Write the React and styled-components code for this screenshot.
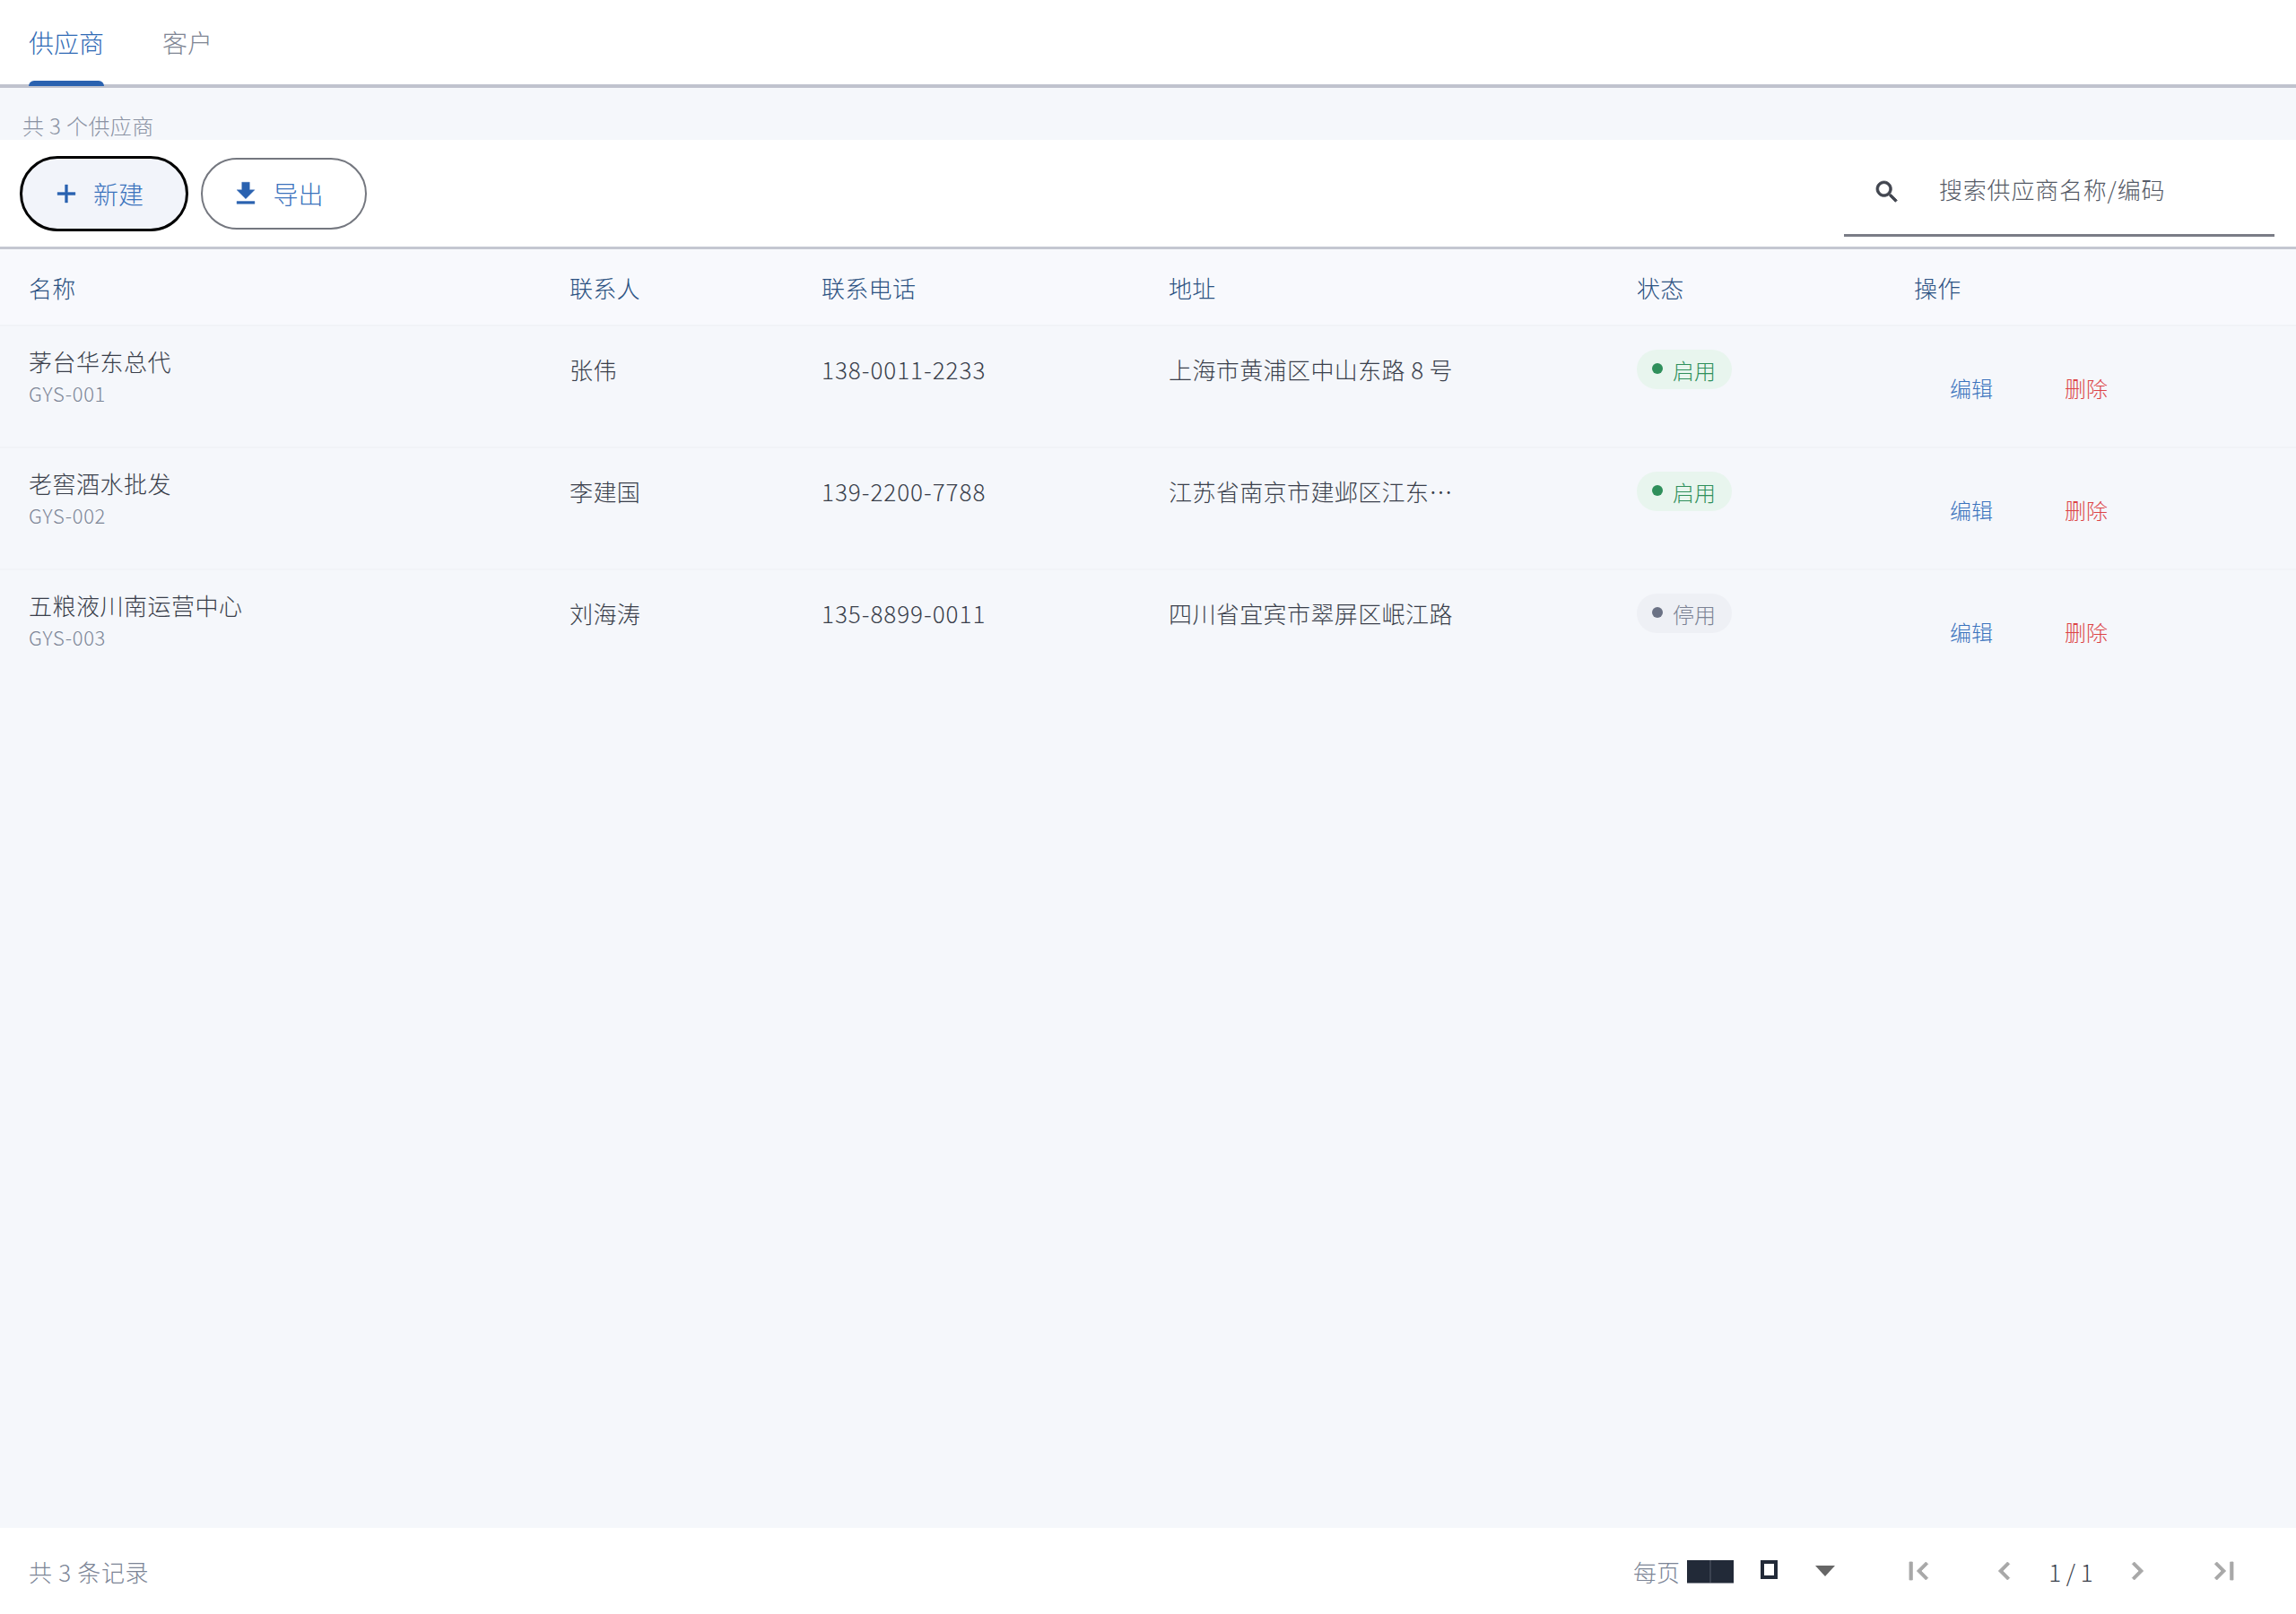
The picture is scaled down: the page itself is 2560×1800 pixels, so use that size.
import React from "react";
import styled, { createGlobalStyle } from "styled-components";

const GlobalStyle = createGlobalStyle`
  * { box-sizing: border-box; }
  html, body { margin: 0; padding: 0; }
  body {
    background: #f5f7fb;
    font-family: "Noto Sans CJK SC", "Noto Sans", sans-serif;
    font-weight: 200;
  }
`;

const Page = styled.div`
  height: 1800px;
  display: flex;
  flex-direction: column;
  background: #f5f7fb;
`;

const TabBar = styled.div`
  height: 98px;
  flex: none;
  display: flex;
  gap: 65px;
  padding-left: 32px;
  background: #fff;
  border-bottom: 4px solid #c0c3ce;
`;

const Tab = styled.div`
  position: relative;
  height: 94px;
  padding-top: 26px;
  font-size: 28px;
  line-height: 42px;
  color: ${(p) => (p.$active ? "#2f6ab5" : "#7f8694")};

  &::after {
    content: "";
    display: ${(p) => (p.$active ? "block" : "none")};
    position: absolute;
    left: 0;
    right: 0;
    top: 90px;
    height: 6px;
    background: #2a62b0;
    border-radius: 6px 6px 0 0;
  }
`;

const Summary = styled.div`
  height: 58px;
  flex: none;
  padding: 25px 0 0 25px;
  font-size: 24px;
  line-height: 33px;
  letter-spacing: 0.4px;
  color: #8a92a3;
`;

const Toolbar = styled.div`
  height: 122px;
  flex: none;
  display: flex;
  align-items: center;
  justify-content: space-between;
  padding: 0 24px 0 22px;
  background: #fff;
  border-bottom: 3px solid #c4c7d1;
`;

const Actions = styled.div`
  display: flex;
  align-items: center;
  gap: 14px;
`;

const PillButton = styled.button`
  display: flex;
  align-items: center;
  justify-content: center;
  gap: 13px;
  width: ${(p) => (p.$focused ? "188px" : "185px")};
  height: ${(p) => (p.$focused ? "84px" : "80px")};
  border-radius: 42px;
  border: ${(p) => (p.$focused ? "3px solid #000" : "2px solid #74777f")};
  background: ${(p) => (p.$focused ? "#f2f4fa" : "#fff")};
  color: #3b73bd;
  font-family: inherit;
  font-weight: 200;
  font-size: 28px;
  padding: 0 15px 0 0;

  svg {
    width: 34px;
    height: 34px;
    fill: #2a62b0;
    stroke: #2a62b0;
    stroke-width: 0.3;
    flex: none;
  }
`;

const SearchBox = styled.div`
  width: 480px;
  height: 100px;
  align-self: flex-start;
  margin-top: 8px;
  display: flex;
  align-items: center;
  gap: 42px;
  padding-left: 32px;
  border-bottom: 3px solid #7a7c86;

  svg {
    width: 32px;
    height: 32px;
    fill: #41454f;
    stroke: #41454f;
    stroke-width: 0.6;
    flex: none;
    margin-top: 3px;
  }
`;

const SearchText = styled.span`
  font-size: 26px;
  line-height: 38px;
  letter-spacing: 0.8px;
  color: #555a66;
  margin-top: -3px;
`;

const Row = styled.div`
  display: grid;
  grid-template-columns: 603px 281px 387px 522px 309px 1fr;
  padding-left: 32px;
  height: ${(p) => (p.$header ? "86px" : "136px")};
  flex: none;
  background: ${(p) => (p.$header ? "#f8f9fd" : "transparent")};
  border-bottom: 2px solid ${(p) => (p.$last ? "transparent" : "#f1f3f7")};
`;

const HeadCell = styled.div`
  padding-top: 23px;
  font-size: 26px;
  line-height: 39px;
  letter-spacing: 0.3px;
  color: #2c5282;
`;

const NameCell = styled.div`
  padding-top: 19px;
`;

const Name = styled.div`
  font-size: 26px;
  line-height: 39px;
  letter-spacing: 0.5px;
  color: #3a3f4b;
`;

const Code = styled.div`
  font-size: 22px;
  line-height: 33px;
  letter-spacing: 0.7px;
  color: #7c8596;
`;

const TextCell = styled.div`
  padding-top: 28px;
  font-size: 26px;
  line-height: 39px;
  color: #3a3f4b;
  max-width: ${(p) => p.$maxWidth || "none"};
  white-space: nowrap;
  overflow: hidden;
  text-overflow: ellipsis;
  letter-spacing: ${(p) => p.$spacing || "0.4px"};
`;

const StatusCell = styled.div`
  padding-top: 26px;
`;

const Badge = styled.span`
  display: inline-flex;
  align-items: center;
  gap: 11px;
  width: 106px;
  height: 44px;
  padding-left: 17px;
  border-radius: 22px;
  font-size: 24px;
  background: ${(p) => (p.$on ? "#e8f5ee" : "#eef0f5")};
  color: ${(p) => (p.$on ? "#2f8f5b" : "#7c8394")};

  &::before {
    content: "";
    width: 12px;
    height: 12px;
    border-radius: 50%;
    margin-top: -3px;
    background: ${(p) => (p.$on ? "#2f8f5b" : "#6b7285")};
  }
`;

const ActionCell = styled.div`
  padding: 51px 0 0 40px;
  display: flex;
  gap: 80px;
`;

const LinkText = styled.span`
  font-size: 24px;
  line-height: 36px;
  color: ${(p) => (p.$danger ? "#dc4446" : "#3b73bd")};
`;

const Spacer = styled.div`
  flex: 1;
`;

const Footer = styled.div`
  height: 96px;
  flex: none;
  display: flex;
  align-items: center;
  justify-content: space-between;
  padding: 0 60px 0 32px;
  background: #fff;
`;

const FooterNote = styled.div`
  font-size: 26px;
  line-height: 39px;
  letter-spacing: 0.7px;
  color: #7c8596;
`;

const Pager = styled.div`
  display: flex;
  align-items: center;
`;

const PerPage = styled.span`
  font-size: 26px;
  line-height: 39px;
  color: #7c8596;
  margin-right: 8px;
`;

const SizeBlock = styled.span`
  width: 52px;
  height: 26px;
  margin-top: 1px;
  margin-right: 30px;
  background: linear-gradient(90deg, #222a38 49%, #3b4250 49%, #3b4250 51%, #222a38 51%);
  border-bottom: 1px solid #8a8e97;
`;

const SizeBox = styled.span`
  width: 19px;
  height: 21px;
  margin-top: -4px;
  margin-right: 38px;
  border: 4px solid #222a38;
`;

const Caret = styled.svg`
  width: 30px;
  height: 18px;
  fill: #666;
  margin-right: 69px;
`;

const PageIcon = styled.svg`
  width: 40px;
  height: 40px;
  fill: #a8a8a8;
  stroke: #a8a8a8;
  stroke-width: 0.5;
  margin-right: ${(p) => p.$right || "0"};
`;

const PageText = styled.span`
  font-size: 26px;
  line-height: 39px;
  color: #3a3f4b;
  width: 52px;
  text-align: center;
  margin: 0 28px;
  white-space: nowrap;
`;

const suppliers = [
  { name: "茅台华东总代", code: "GYS-001", contact: "张伟", phone: "138-0011-2233", address: "上海市黄浦区中山东路 8 号", on: true },
  { name: "老窖酒水批发", code: "GYS-002", contact: "李建国", phone: "139-2200-7788", address: "江苏省南京市建邺区江东中路 66 号", on: true },
  { name: "五粮液川南运营中心", code: "GYS-003", contact: "刘海涛", phone: "135-8899-0011", address: "四川省宜宾市翠屏区岷江路", on: false },
];

const columns = ["名称", "联系人", "联系电话", "地址", "状态", "操作"];

const App = () => {
  return (
    <Page>
      <GlobalStyle />
      <TabBar>
        <Tab $active>供应商</Tab>
        <Tab>客户</Tab>
      </TabBar>
      <Summary>共 3 个供应商</Summary>
      <Toolbar>
        <Actions>
          <PillButton $focused>
            <svg viewBox="0 0 24 24">
              <path d="M19 13h-6v6h-2v-6H5v-2h6V5h2v6h6v2z" />
            </svg>
            新建
          </PillButton>
          <PillButton>
            <svg viewBox="0 0 24 24">
              <path d="M19 9h-4V3H9v6H5l7 7 7-7zM5 18v2h14v-2H5z" />
            </svg>
            导出
          </PillButton>
        </Actions>
        <SearchBox>
          <svg viewBox="0 0 24 24">
            <path d="M15.5 14h-.79l-.28-.27C15.41 12.59 16 11.11 16 9.5 16 5.91 13.09 3 9.5 3S3 5.91 3 9.5 5.91 16 9.5 16c1.61 0 3.09-.59 4.23-1.57l.27.28v.79l5 4.99L20.49 19l-4.99-5zm-6 0C7.01 14 5 11.99 5 9.5S7.01 5 9.5 5 14 7.01 14 9.5 11.99 14 9.5 14z" />
          </svg>
          <SearchText>搜索供应商名称/编码</SearchText>
        </SearchBox>
      </Toolbar>
      <Row $header>
        {columns.map((c) => (
          <HeadCell key={c}>{c}</HeadCell>
        ))}
      </Row>
      {suppliers.map((s, i) => (
        <Row key={s.code} $last={i === suppliers.length - 1}>
          <NameCell>
            <Name>{s.name}</Name>
            <Code>{s.code}</Code>
          </NameCell>
          <TextCell>{s.contact}</TextCell>
          <TextCell $spacing="1px">{s.phone}</TextCell>
          <TextCell $maxWidth="320px">{s.address}</TextCell>
          <StatusCell>
            <Badge $on={s.on}>{s.on ? "启用" : "停用"}</Badge>
          </StatusCell>
          <ActionCell>
            <LinkText>编辑</LinkText>
            <LinkText $danger>删除</LinkText>
          </ActionCell>
        </Row>
      ))}
      <Spacer />
      <Footer>
        <FooterNote>共 3 条记录</FooterNote>
        <Pager>
          <PerPage>每页</PerPage>
          <SizeBlock />
          <SizeBox />
          <Caret viewBox="0 0 30 18">
            <path d="M4 3h22L15 15z" />
          </Caret>
          <PageIcon viewBox="0 0 24 24" $right="56px">
            <path d="M18.41 16.59L13.82 12l4.59-4.59L17 6l-6 6 6 6zM6 6h2v12H6z" />
          </PageIcon>
          <PageIcon viewBox="0 0 24 24">
            <path d="M15.41 7.41L14 6l-6 6 6 6 1.41-1.41L10.83 12z" />
          </PageIcon>
          <PageText>1 / 1</PageText>
          <PageIcon viewBox="0 0 24 24" $right="57px">
            <path d="M10 6L8.59 7.41 13.17 12l-4.58 4.59L10 18l6-6z" />
          </PageIcon>
          <PageIcon viewBox="0 0 24 24">
            <path d="M5.59 7.41L10.18 12l-4.59 4.59L7 18l6-6-6-6zM16 6h2v12h-2z" />
          </PageIcon>
        </Pager>
      </Footer>
    </Page>
  );
};

export default App;
